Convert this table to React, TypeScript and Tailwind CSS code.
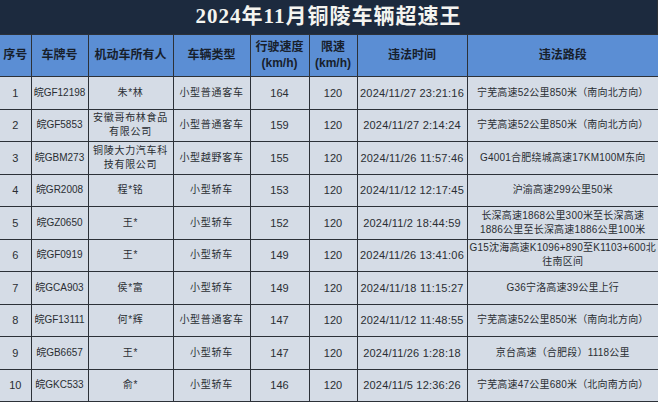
const rows = [
  ["1", "皖GF12198", ["朱*林"], "小型普通客车", "164", "120", "2024/11/27 23:21:16", ["宁芜高速52公里850米（南向北方向）"]],
  ["2", "皖GF5853", ["安徽哥布林食品", "有限公司"], "小型普通客车", "159", "120", "2024/11/27 2:14:24", ["宁芜高速52公里850米（南向北方向）"]],
  ["3", "皖GBM273", ["铜陵大力汽车科", "技有限公司"], "小型越野客车", "155", "120", "2024/11/26 11:57:46", ["G4001合肥绕城高速17KM100M东向"]],
  ["4", "皖GR2008", ["程*铭"], "小型轿车", "153", "120", "2024/11/12 12:17:45", ["沪渝高速299公里50米"]],
  ["5", "皖GZ0650", ["王*"], "小型轿车", "152", "120", "2024/11/2 18:44:59", ["长深高速1868公里300米至长深高速", "1886公里至长深高速1886公里100米"]],
  ["6", "皖GF0919", ["王*"], "小型轿车", "149", "120", "2024/11/26 13:41:06", ["G15沈海高速K1096+890至K1103+600北", "往南区间"]],
  ["7", "皖GCA903", ["侯*富"], "小型轿车", "149", "120", "2024/11/18 11:15:27", ["G36宁洛高速39公里上行"]],
  ["8", "皖GF13111", ["何*辉"], "小型普通客车", "147", "120", "2024/11/12 11:48:55", ["宁芜高速52公里850米（南向北方向）"]],
  ["9", "皖GB6657", ["王*"], "小型轿车", "147", "120", "2024/11/26 1:28:18", ["京台高速（合肥段）1118公里"]],
  ["10", "皖GKC533", ["俞*"], "小型轿车", "146", "120", "2024/11/5 12:36:26", ["宁芜高速47公里680米（北向南方向）"]],
] as const;

const cjk = "font-['Liberation_Sans','Noto_Sans_CJK_SC',sans-serif]";
const cell = "border border-[#2c3138] p-0";

export default function App() {
  return (
    <div className="w-[660px] h-[402px] bg-white overflow-hidden">
      <div className="w-[658px] border-r border-b border-[#2c3138]">
        <div className="h-[35px] bg-[#1c2a3e] flex items-center justify-center border-b border-[#2c3138]">
          <span className="text-[#f4f4f0] text-[21px] font-bold tracking-[1px] font-['Liberation_Serif','Noto_Sans_CJK_SC',serif]">
            2024年11月铜陵车辆超速王
          </span>
        </div>
        <table className={`w-[658px] table-fixed border-collapse ${cjk}`}>
          <colgroup>
            <col className="w-[31px]" />
            <col className="w-[57px]" />
            <col className="w-[85px]" />
            <col className="w-[77px]" />
            <col className="w-[59px]" />
            <col className="w-[48px]" />
            <col className="w-[110px]" />
            <col className="w-[191px]" />
          </colgroup>
          <thead>
            <tr className="h-[41px] bg-[#5b8ed4] text-[#17202c] text-[12px] font-bold leading-[16px]">
              <th className={`${cell} border-t-0 border-l-0`}>序号</th>
              <th className={`${cell} border-t-0`}>车牌号</th>
              <th className={`${cell} border-t-0`}>机动车所有人</th>
              <th className={`${cell} border-t-0`}>车辆类型</th>
              <th className={`${cell} border-t-0`}>行驶速度<br />(km/h)</th>
              <th className={`${cell} border-t-0`}>限速<br />(km/h)</th>
              <th className={`${cell} border-t-0`}>违法时间</th>
              <th className={`${cell} border-t-0 border-r-0`}>违法路段</th>
            </tr>
          </thead>
          <tbody>
            {rows.map((r, i) => (
              <tr
                key={r[0]}
                className={`${i % 2 === 0 ? "h-[33px]" : "h-[32px]"} bg-[#d5dce6] text-[#2a2e33] text-[11px] leading-[14px] text-center`}
              >
                <td className={`${cell} border-l-0`}>{r[0]}</td>
                <td className={`${cell} whitespace-nowrap text-[10px]`}>{r[1]}</td>
                <td className={`${cell} text-[10px] tracking-[0.7px]`}>
                  {r[2].map((t) => (<div key={t}>{t}</div>))}
                </td>
                <td className={`${cell} text-[10px] tracking-[0.7px]`}>{r[3]}</td>
                <td className={cell}>{r[4]}</td>
                <td className={cell}>{r[5]}</td>
                <td className={`${cell} whitespace-nowrap tracking-[0.2px]`}>{r[6]}</td>
                <td className={`${cell} border-r-0 whitespace-nowrap text-[10px] tracking-[0.2px]`}>
                  {r[7].map((t) => (<div key={t}>{t}</div>))}
                </td>
              </tr>
            ))}
          </tbody>
        </table>
      </div>
    </div>
  );
}
